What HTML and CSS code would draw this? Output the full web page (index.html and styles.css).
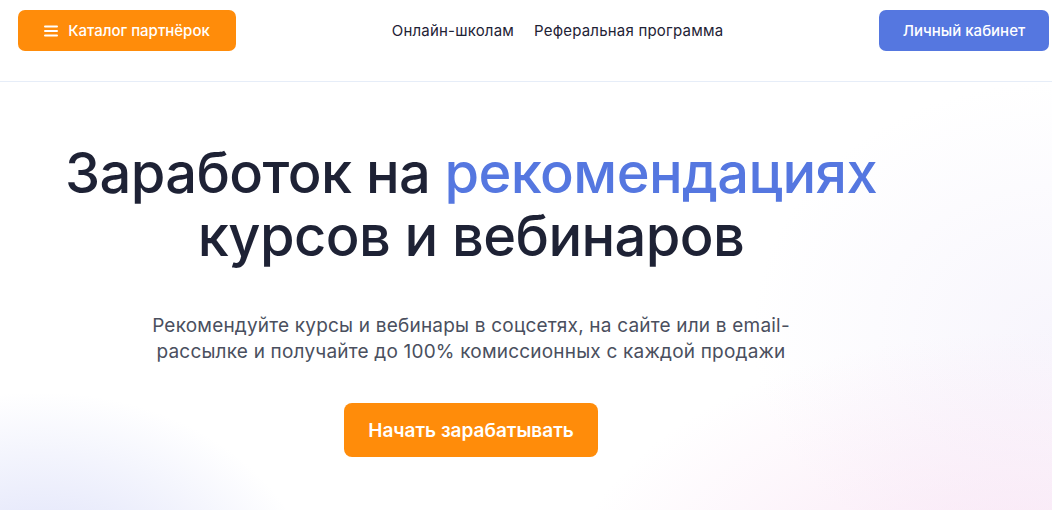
FILE: index.html
```html
<!DOCTYPE html>
<html lang="ru">
<head>
    <meta charset="UTF-8">
    <meta name="viewport" content="width=device-width, initial-scale=1.0">
    <title>Партнёрская программа</title>
    <link rel="stylesheet" href="styles.css">
</head>
<body>

    <header class="header">
        <a href="#" class="btn btn-orange btn-catalog">
            <svg class="menu-icon" width="14" height="12" viewBox="0 0 14 12">
                <rect x="0" y="0.5" width="14" height="2" rx="1" fill="#fff"/>
                <rect x="0" y="5" width="14" height="2" rx="1" fill="#fff"/>
                <rect x="0" y="9.5" width="14" height="2" rx="1" fill="#fff"/>
            </svg>
            Каталог партнёрок
        </a>

        <nav class="nav">
            <a href="#">Онлайн-школам</a>
            <a href="#">Реферальная программа</a>
        </nav>

        <a href="#" class="btn btn-blue">Личный кабинет</a>
    </header>

    <!-- Hero -->
    <section class="hero">
        <div class="hero-content">
            <h1 class="hero-title">Заработок на <span class="accent">рекомендациях</span><br>курсов и вебинаров</h1>
            <p class="hero-text">Рекомендуйте курсы и вебинары в соцсетях, на сайте или в email-<br>рассылке и получайте до 100% комиссионных с каждой продажи</p>
            <a href="#" class="btn btn-orange btn-big">Начать зарабатывать</a>
        </div>
    </section>

</body>
</html>
```

FILE: styles.css
```css
* {
    box-sizing: border-box;
}

body {
    margin: 0;
    font-family: Inter, "Noto Sans", sans-serif;
    color: #1e2235;
    background-color: #fff;
    height: 510px;
    overflow: hidden;
}

a {
    text-decoration: none;
}

.header {
    display: flex;
    align-items: flex-start;
    justify-content: space-between;
    height: 82px;
    padding: 10px 3px 0 18px;
    border-bottom: 1px solid #e6edf8;
}

.btn {
    display: inline-flex;
    align-items: center;
    justify-content: center;
    color: #fff;
    font-size: 15px;
    font-weight: 500;
    border-radius: 7px;
}

.btn-orange {
    background-color: #ff8c0a;
}

.btn-blue {
    background-color: #5577e0;
    width: 170px;
    height: 41px;
}

.btn-catalog {
    width: 218px;
    height: 41px;
    gap: 10px;
}

.menu-icon {
    display: block;
}

.nav {
    display: flex;
    gap: 20px;
    padding-top: 11px;
}

.nav a {
    color: #1e2235;
    font-size: 15px;
    letter-spacing: 0.2px;
}

/* Hero with soft background glows */
.hero {
    height: 428px;
    background:
        radial-gradient(ellipse 280px 220px at 40px 530px, rgba(196, 202, 245, 0.7), rgba(255, 255, 255, 0)),
        radial-gradient(ellipse 460px 280px at 1020px 530px, rgba(245, 212, 238, 0.65), rgba(255, 255, 255, 0)),
        radial-gradient(ellipse 300px 250px at 1052px 250px, rgba(240, 236, 250, 0.5), rgba(255, 255, 255, 0)),
        #fff;
}

.hero-content {
    width: 942px;
    display: flex;
    flex-direction: column;
    align-items: center;
    padding-top: 60px;
}

.hero-title {
    margin: 0;
    font-size: 56px;
    font-weight: 500;
    line-height: 63px;
    letter-spacing: -0.6px;
    text-align: center;
    color: #1e2235;
}

.accent {
    color: #5577e0;
}

.hero-text {
    margin: 45px 0 0;
    font-size: 19px;
    line-height: 26px;
    letter-spacing: 0.2px;
    color: #4a4f5e;
    text-align: center;
}

.btn-big {
    margin-top: 38px;
    width: 254px;
    height: 54px;
    font-size: 19px;
    font-weight: 600;
    border-radius: 8px;
}
```
